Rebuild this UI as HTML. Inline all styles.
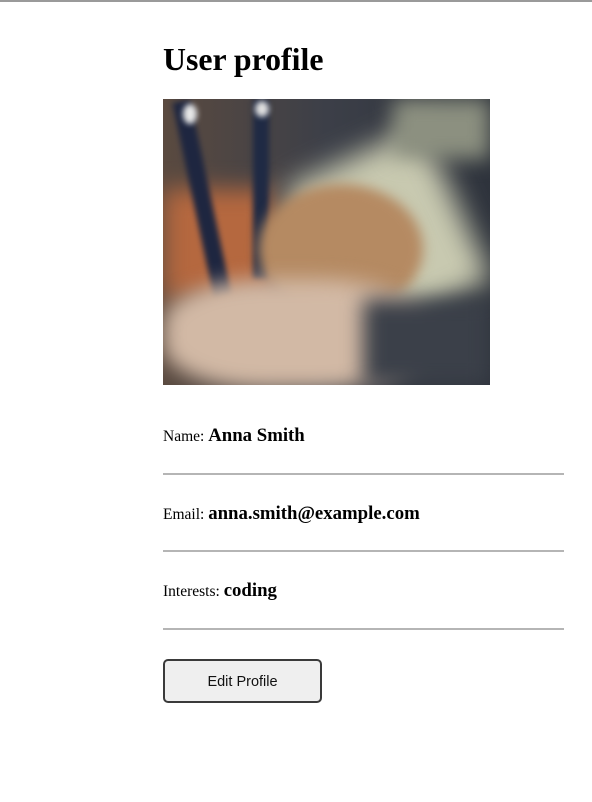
<!DOCTYPE html>
<html><head><style>
html,body{margin:0;padding:0;background:#fff;width:592px;height:802px;overflow:hidden;position:relative;font-family:"Liberation Serif",serif;color:#000}
.top{position:absolute;left:0;top:0;width:592px;height:2px;background:#9a9a9a}
h1{position:absolute;left:163px;top:40px;margin:0;font-size:31.8px;font-weight:bold;line-height:40px}
.img{position:absolute;left:163px;top:99px;width:327px;height:286px;overflow:hidden;background:#3a3f4a}
.img div{position:absolute}
.row{position:absolute;left:163px;font-size:15.5px;line-height:20px}
.row b{font-size:18.8px}
.hr{position:absolute;left:163px;width:401px;height:2px;background:#b5b5b5}
.btn{position:absolute;left:163px;top:659px;width:155px;height:40px;border:2px solid #3a3a3a;border-radius:5px;background:#efefef;font-family:"Liberation Sans",sans-serif;font-size:14.5px;text-align:center;line-height:42px;color:#111}
</style></head><body>
<div class="top"></div>
<h1>User profile</h1>
<div class="img">
  <div style="left:0;top:0;width:327px;height:286px;background:linear-gradient(90deg,#5a4a40 0%,#3c3f48 50%,#2e333c 100%)"></div>
  <div style="left:0;top:90px;width:110px;height:110px;background:#b5683f;filter:blur(12px)"></div>
  <div style="left:150px;top:50px;width:150px;height:170px;background:#c8c9b0;filter:blur(14px);transform:rotate(-25deg)"></div>
  <div style="left:230px;top:0;width:97px;height:60px;background:#8c9080;filter:blur(10px)"></div>
  <div style="left:30px;top:0;width:18px;height:200px;background:#1e2640;filter:blur(3px);transform:rotate(-12deg)"></div>
  <div style="left:90px;top:0;width:16px;height:180px;background:#1f2a44;filter:blur(3px)"></div>
  <div style="left:95px;top:85px;width:165px;height:130px;border-radius:50%;background:#b58a62;filter:blur(6px)"></div>
  <div style="left:0;top:180px;width:260px;height:110px;border-radius:40%;background:#d2b9a5;filter:blur(10px)"></div>
  <div style="left:200px;top:200px;width:127px;height:86px;background:#3b4049;filter:blur(10px)"></div>
  <div style="left:20px;top:5px;width:14px;height:20px;border-radius:50%;background:#e8e8e8;filter:blur(3px)"></div>
  <div style="left:92px;top:2px;width:14px;height:16px;border-radius:50%;background:#e0e0e0;filter:blur(3px)"></div>
</div>
<div class="row" style="top:426px">Name: <b>Anna Smith</b></div>
<div class="hr" style="top:473px"></div>
<div class="row" style="top:504px">Email: <b>anna.smith@example.com</b></div>
<div class="hr" style="top:550px"></div>
<div class="row" style="top:581px">Interests: <b>coding</b></div>
<div class="hr" style="top:628px"></div>
<div class="btn">Edit Profile</div>
</body></html>
